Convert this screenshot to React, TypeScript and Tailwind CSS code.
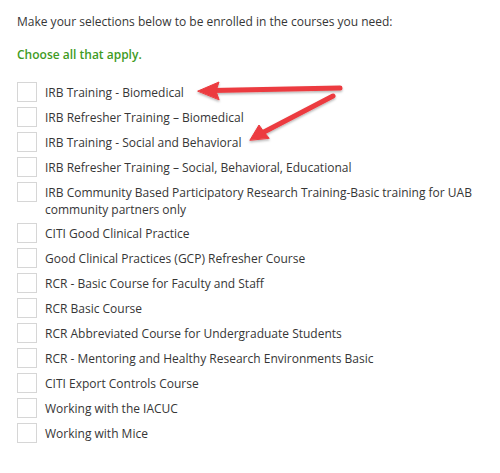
import React from 'react';

const courses = [
  'IRB Training - Biomedical',
  'IRB Refresher Training – Biomedical',
  'IRB Training - Social and Behavioral',
  'IRB Refresher Training – Social, Behavioral, Educational',
  'IRB Community Based Participatory Research Training-Basic training for UAB community partners only',
  'CITI Good Clinical Practice',
  'Good Clinical Practices (GCP) Refresher Course',
  'RCR - Basic Course for Faculty and Staff',
  'RCR Basic Course',
  'RCR Abbreviated Course for Undergraduate Students',
  'RCR - Mentoring and Healthy Research Environments Basic',
  'CITI Export Controls Course',
  'Working with the IACUC',
  'Working with Mice',
];

const Arrows = () => (
  <svg className="absolute left-0 top-0 pointer-events-none" width="500" height="473" viewBox="0 0 500 473">
    <defs>
      <filter id="sh" x="-10%" y="-10%" width="120%" height="130%">
        <feDropShadow dx="0" dy="1.5" stdDeviation="1.2" floodColor="#000" floodOpacity="0.3" />
      </filter>
    </defs>
    <g filter="url(#sh)" fill="#ec3b3f" stroke="#ec3b3f" strokeLinecap="round" strokeLinejoin="round">
      <line x1="340" y1="88" x2="212" y2="90.5" strokeWidth="5" />
      <polygon points="198,91 219,82 216,91 219,99.5" strokeWidth="1" />
      <line x1="333" y1="96" x2="262" y2="133" strokeWidth="5" />
      <polygon points="250,140 259,125 264,132 269,138" strokeWidth="1" />
    </g>
  </svg>
);

export default function App() {
  return (
    <div className="relative w-[500px] h-[473px] bg-white text-[#363636] text-[12px] leading-[17px]" style={{ fontFamily: '"Open Sans", "Noto Sans", sans-serif' }}>
      <div className="pl-[17px] pt-[13px]">
        <p>Make your selections below to be enrolled in the courses you need:</p>
        <p className="mt-[16px] font-semibold text-[#3f9b1f]">Choose all that apply.</p>
        <ul className="mt-[19px] grid gap-[5px] pr-[14px]">
          {courses.map((c) => (
            <li key={c} className="grid grid-cols-[20px_1fr] items-start gap-x-[8px]">
              <div className="w-[20px] h-[20px] border border-[#d6d6d6] bg-white" />
              <div className="pt-[2px]">{c}</div>
            </li>
          ))}
        </ul>
      </div>
      <Arrows />
    </div>
  );
}
